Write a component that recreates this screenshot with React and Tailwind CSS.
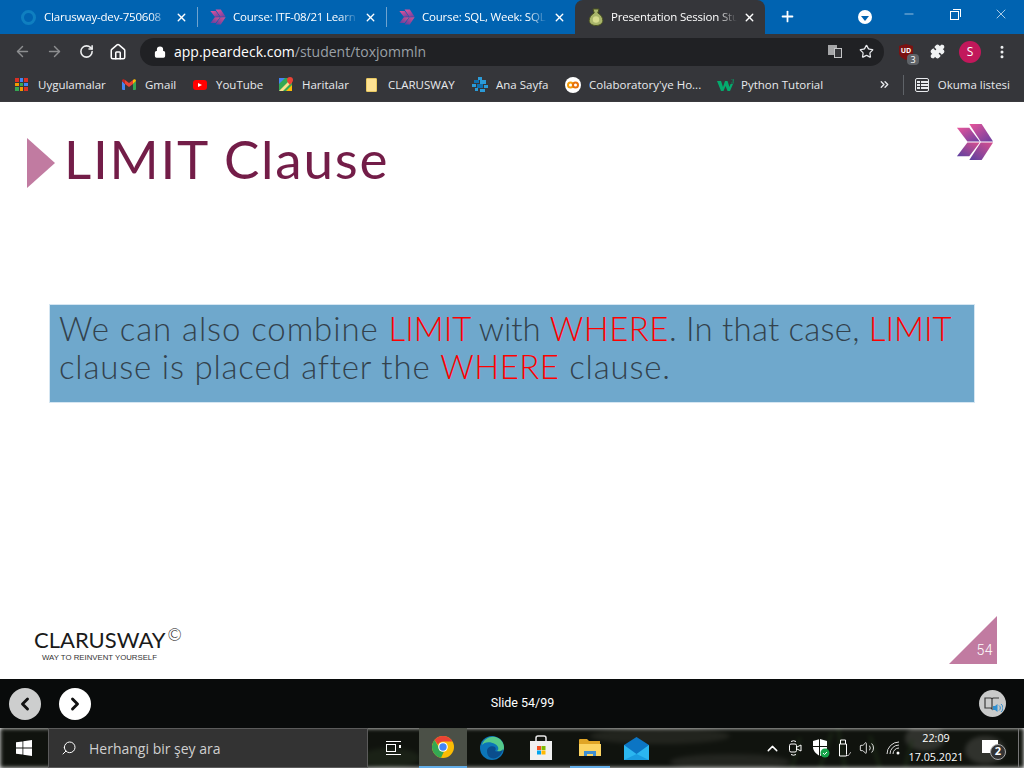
import { ArrowLeft, ArrowRight, RotateCw, Home, Lock, Star, Puzzle, Plus, X, Minus, ChevronLeft, ChevronRight, ChevronUp, ChevronsRight, Search, MoreVertical, Volume2 } from "lucide-react";

function Chevrons({ size = 16 }) {
  return (
    <svg width={size} height={size} viewBox="0 0 40 40" className="shrink-0">
      <defs>
        <linearGradient id="chevTop" x1="0" y1="0" x2="1" y2="1">
          <stop offset="0" stopColor="#e8559a" />
          <stop offset="1" stopColor="#6b3fa0" />
        </linearGradient>
        <linearGradient id="chevBottom" x1="0" y1="1" x2="1" y2="0">
          <stop offset="0" stopColor="#5b3fa0" />
          <stop offset="1" stopColor="#d9508f" />
        </linearGradient>
      </defs>
      <path d="M1 5h13l11 14.500H12z" fill="url(#chevTop)" />
      <path d="M12 20.500h13L14 35H1z" fill="url(#chevBottom)" />
      <path d="M14 1h13l12 18.500H26z" fill="url(#chevTop)" />
      <path d="M26 20.500h13L27 39H14z" fill="url(#chevBottom)" />
    </svg>
  );
}

function PearIcon() {
  return (
    <svg width="16" height="18" viewBox="0 0 16 18" className="shrink-0">
      <path d="M5 1h6L9.800 5c3 1.500 5 4.500 5 7.500 0 3-3 5-6.800 5s-6.800-2-6.800-5C1.200 9.500 3.200 6.500 6.200 5z" fill="#a9b56b" stroke="#4b5320" strokeWidth="1" />
      <circle cx="8" cy="11.500" r="3.200" fill="#d6dc8e" />
    </svg>
  );
}

function Tab({ icon, title, active }) {
  return (
    <div className={active ? "flex items-center h-[34px] w-[190px] rounded-t-lg bg-[#35363a] pl-[13px] pr-[9px]" : "flex items-center h-[34px] w-[188px] pl-[12px] pr-[9px]"}>
      {icon}
      <span className="ml-[7px] mb-[1px] flex-1 overflow-hidden whitespace-nowrap text-[11.500px] tracking-[-0.2px] text-white mask-r-from-85%">{title}</span>
      <X size={13} strokeWidth={2.500} className="ml-[6px] shrink-0 text-white" />
    </div>
  );
}

function Bookmark({ icon, label, className }) {
  return (
    <div className={"flex items-center whitespace-nowrap text-[11.500px] text-[#e8eaed] " + className}>
      {icon}
      <span>{label}</span>
    </div>
  );
}

function AppsIcon() {
  const colors = ["#d93025", "#4285f4", "#d93025", "#f29900", "#34a853", "#4285f4", "#34a853", "#f29900", "#d93025"];
  return (
    <div className="grid grid-cols-3 gap-[1px] w-[13px] h-[13px]">
      {colors.map((c, i) => (
        <div key={i} style={{ background: c }} />
      ))}
    </div>
  );
}

function GmailIcon() {
  return (
    <svg width="14" height="11" viewBox="0 0 14 11">
      <path d="M0 2v8a1 1 0 0 0 1 1h2V5z" fill="#4285f4" />
      <path d="M14 2v8a1 1 0 0 1-1 1h-2V5z" fill="#34a853" />
      <path d="M3 5V1L7 4l4-3v4L7 8z" fill="#ea4335" />
      <path d="M0 2c0-2 2-2.500 3-1v4z" fill="#c5221f" />
      <path d="M14 2c0-2-2-2.500-3-1v4z" fill="#fbbc04" />
    </svg>
  );
}

function MapsIcon() {
  return (
    <svg width="15" height="15" viewBox="0 0 15 15">
      <rect x="0" y="1" width="13" height="13" fill="#34a853" />
      <path d="M0 14 13 1v4L4 14z" fill="#fbe08a" />
      <path d="M7 14 13 8v6z" fill="#fbbc04" />
      <path d="M0 1h6L0 7z" fill="#4285f4" />
      <path d="M11 0a3 3 0 0 1 3 3c0 2-3 5-3 5S8 5 8 3a3 3 0 0 1 3-3z" fill="#ea4335" />
    </svg>
  );
}

function AnaIcon() {
  return (
    <svg width="16" height="15" viewBox="0 0 16 15" fill="#2b9bd8">
      <rect x="6" y="0" width="4" height="3" />
      <rect x="2" y="3" width="5" height="3" fill="#0d6fb0" />
      <rect x="8" y="3" width="6" height="4" />
      <rect x="0" y="7" width="4" height="3" />
      <rect x="5" y="7" width="6" height="4" fill="#0d6fb0" />
      <rect x="12" y="8" width="4" height="3" />
      <rect x="3" y="11" width="3" height="3" />
      <rect x="8" y="12" width="5" height="3" />
    </svg>
  );
}

function WinLogo() {
  return (
    <svg width="16" height="16" viewBox="0 0 16 16" fill="#fff">
      <path d="M0 2.300 6.500 1.400V7.600H0zM7.300 1.300 16 0V7.600H7.300zM0 8.400H6.500V14.600L0 13.700zM7.300 8.400H16V16L7.300 14.700z" />
    </svg>
  );
}

function Wallpaper() {
  return (
    <svg className="absolute inset-0 blur-[2px]" width="1024" height="40" viewBox="0 0 1024 40">
      <rect width="1024" height="40" fill="#10130e" />
      <ellipse cx="150" cy="8" rx="90" ry="10" fill="#171c13" />
      <ellipse cx="390" cy="30" rx="30" ry="10" fill="#1a2116" />
      <ellipse cx="660" cy="8" rx="70" ry="8" fill="#22241e" />
      <ellipse cx="730" cy="34" rx="60" ry="8" fill="#232520" />
      <ellipse cx="925" cy="10" rx="20" ry="13" fill="#30322d" />
      <ellipse cx="985" cy="22" rx="20" ry="14" fill="#30322d" />
      <path d="M820 40 832 4M845 40 838 0M880 40 870 8M905 40 912 12M792 40 800 10" stroke="#1f3019" strokeWidth="2" />
    </svg>
  );
}

export default function App() {
  return (
    <div className="flex flex-col w-[1024px] h-[768px] overflow-hidden bg-white font-['Open_Sans',sans-serif]">
      {/* tabs */}
      <div className="flex items-start h-[34px] shrink-0 bg-[#0063b1] pl-[9px]">
        <Tab title="Clarusway-dev-750608" icon={<div className="w-[15px] h-[15px] mr-[1px] shrink-0 rounded-full border-[3px] border-[#0f7fc0] bg-[#0063b1]" />} />
        <div className="w-px h-[20px] mt-[7px] bg-[#6fa3cf]" />
        <Tab title="Course: ITF-08/21 Learn" icon={<Chevrons />} />
        <div className="w-px h-[20px] mt-[7px] bg-[#6fa3cf]" />
        <Tab title="Course: SQL, Week: SQL" icon={<Chevrons />} />
        <Tab active title="Presentation Session Stu" icon={<PearIcon />} />
        <Plus size={17} strokeWidth={2.500} className="ml-[14px] mt-[8px] text-white" />
        <div className="ml-[62px] mt-[10px] flex items-center justify-center w-[14px] h-[14px] rounded-full bg-white">
          <div className="w-0 h-0 mt-[2px] border-x-[4px] border-t-[5px] border-x-transparent border-t-[#0063b1]" />
        </div>
        <Minus size={14} strokeWidth={1} className="ml-[30px] mt-[7px] text-white" />
        <div className="relative ml-[34px] mt-[11px] w-[9px] h-[9px] border border-white">
          <div className="absolute -top-[3px] -right-[3px] w-[8px] h-[8px] border-t border-r border-white" />
        </div>
        <X size={16} strokeWidth={1} className="ml-[34px] mt-[6px] text-white" />
      </div>

      {/* toolbar */}
      <div className="flex items-center h-[35px] shrink-0 bg-[#35363a] pl-[14px] pr-[8px]">
        <ArrowLeft size={17} className="text-[#8d8e90]" />
        <ArrowRight size={17} className="ml-[15px] text-[#8d8e90]" />
        <RotateCw size={15} strokeWidth={2.500} className="ml-[16px] text-[#eeeff0]" />
        <Home size={18} strokeWidth={2} className="ml-[15px] text-white" />
        <div className="flex items-center ml-[13px] w-[744px] h-[28px] rounded-full bg-[#202124] pl-[14px] pr-[10px]">
          <Lock size={12} strokeWidth={2.500} className="text-white" fill="white" />
          <span className="ml-[8px] text-[14px] text-white">app.peardeck.com<span className="text-[#9aa0a6]">/student/toxjommln</span></span>
          <div className="relative ml-auto w-[14px] h-[13px]">
            <div className="absolute left-0 top-0 w-[9px] h-[10px] bg-[#a5a6a8]" />
            <div className="absolute right-0 bottom-0 w-[8px] h-[10px] border border-[#c4c5c7] bg-[#35363a]" />
          </div>
          <Star size={15} className="ml-[17px] text-[#e8eaed]" />
        </div>
        <div className="relative ml-[15px] w-[14px] h-[16px]">
          <svg width="14" height="16" viewBox="0 0 14 16" className="absolute inset-0">
            <path d="M7 0l7 2v7c0 3-3 5-7 7-4-2-7-4-7-7V2z" fill="#7a1212" />
          </svg>
          <span className="absolute inset-0 text-[7px] font-bold leading-[14px] text-center text-white">UD</span>
          <div className="absolute -right-[6px] top-[10px] w-[12px] h-[11px] rounded-sm bg-[#5f6368] text-[9px] text-center leading-[11px] text-white">3</div>
        </div>
        <Puzzle size={15} className="ml-[17px] text-[#f1f3f4]" fill="#f1f3f4" />
        <div className="flex items-center justify-center ml-[14px] w-[22px] h-[22px] rounded-full bg-[#c2185b] text-[12px] text-white">S</div>
        <MoreVertical size={16} strokeWidth={2.500} className="ml-[13px] text-[#f1f3f4]" />
      </div>

      {/* bookmarks */}
      <div className="flex items-center h-[33px] shrink-0 border-b border-[#3a3b3e] bg-[#35363a] pl-[15px] pr-[14px] pb-[1px]">
        <Bookmark icon={<AppsIcon />} label="Uygulamalar" className="w-[107px] gap-[10px]" />
        <Bookmark icon={<GmailIcon />} label="Gmail" className="w-[71px] gap-[9px]" />
        <Bookmark icon={<div className="flex items-center justify-center w-[14px] h-[10px] rounded-[3px] bg-[#ff0000]"><div className="w-0 h-0 border-y-[2.500px] border-l-[4px] border-y-transparent border-l-white" /></div>} label="YouTube" className="w-[86px] gap-[9px]" />
        <Bookmark icon={<MapsIcon />} label="Haritalar" className="w-[87px] gap-[8px]" />
        <Bookmark icon={<div className="w-[11px] h-[14px] rounded-[1px] border border-[#e8c860] bg-[#fde293]" />} label="CLARUSWAY" className="w-[106px] gap-[11px]" />
        <Bookmark icon={<AnaIcon />} label="Ana Sayfa" className="w-[93px] gap-[8px]" />
        <Bookmark
          icon={
            <svg width="16" height="16" viewBox="0 0 16 16">
              <circle cx="8" cy="8" r="8" fill="#fff" />
              <circle cx="5.500" cy="8" r="2.500" fill="none" stroke="#f59e0b" strokeWidth="2" />
              <circle cx="10.500" cy="8" r="2.500" fill="none" stroke="#e8710a" strokeWidth="2" />
            </svg>
          }
          label="Colaboratory'ye Ho..."
          className="w-[152px] gap-[8px]"
        />
        <Bookmark
          icon={
            <svg width="17" height="12" viewBox="0 0 17 12">
              <path d="M0 2h4l2 6 2-6h2.500l2 6 1-3h2.500l-3 7h-2.500L8.500 7l-2 5H4z" fill="#04aa6d" />
              <path d="M14 0h3v1l-1.500 1H17v2h-3" fill="none" stroke="#04aa6d" strokeWidth=".6" />
            </svg>
          }
          label="Python Tutorial"
          className="gap-[7px]"
        />
        <ChevronsRight size={13} strokeWidth={2.500} className="ml-auto mr-[2px] text-[#e8eaed]" />
        <div className="w-px h-[20px] ml-[10px] bg-[#5f6368]" />
        <Bookmark
          icon={
            <div className="grid grid-cols-[3px_7px] gap-[1px] content-center w-[14px] h-[14px] rounded-[2px] border border-[#e8eaed] pl-[1px]">
              <div className="h-[2px] bg-[#e8eaed]" /><div className="h-[2px] bg-[#e8eaed]" />
              <div className="h-[2px] bg-[#e8eaed]" /><div className="h-[2px] bg-[#e8eaed]" />
              <div className="h-[2px] bg-[#e8eaed]" /><div className="h-[2px] bg-[#e8eaed]" />
            </div>
          }
          label="Okuma listesi"
          className="ml-[11px] gap-[9px]"
        />
      </div>

      {/* slide */}
      <div className="flex flex-col flex-1 bg-white">
        <div className="flex items-start h-[202px] shrink-0 pl-[27px] pr-[30px] pt-[36px]">
          <div className="w-0 h-0 border-y-[25px] border-l-[28px] border-y-transparent border-l-[#c17ba1]" />
          <h1 className="ml-[9px] text-[53px] leading-[50px] -mt-[4px] text-[#731d48] font-['Lato',sans-serif] tracking-[1.750px]">LIMIT Clause</h1>
          <div className="ml-auto -mt-[15px]">
            <Chevrons size={38} />
          </div>
        </div>
        <div className="mx-[49px] h-[99px] shrink-0 border border-[#d5e6f2] bg-[#6fa8cc] pl-[9px] pt-[4px] font-['Lato',sans-serif] font-light text-[33px] leading-[38px] text-[#33424d]">
          <span className="tracking-[0.9px]">We can also combine </span>
          <span className="text-[#ff0000]">LIMIT</span> with <span className="tracking-[0.5px] text-[#ff0000]">WHERE</span>
          <span className="tracking-[0.2px]">. In that case, </span>
          <span className="text-[#ff0000]">LIMIT</span>
          <br />
          <span className="tracking-[0.8px]">clause is placed after the </span>
          <span className="tracking-[0.5px] text-[#ff0000]">WHERE</span>
          <span className="tracking-[0.8px]"> clause.</span>
        </div>
        <div className="flex items-end justify-between mt-auto pl-[34px] pr-[27px] pb-[15px]">
          <div className="pb-[1px]">
            <div className="flex items-start font-['Lato',sans-serif] text-[#1a1a1a]">
              <span className="text-[22px] leading-[24px]">CLARUSWAY</span>
              <span className="ml-[2px] text-[17px] leading-[17px] -mt-[2px] font-light">©</span>
            </div>
            <div className="ml-[8px] text-[7.800px] leading-[11px] font-['Liberation_Sans',sans-serif] text-[#333]">WAY TO REINVENT YOURSELF</div>
          </div>
          <div className="flex items-end justify-end w-[48px] h-[48px] bg-[#c17ba1] [clip-path:polygon(100%_0,100%_100%,0_100%)] pr-[4px] pb-[4px] text-[14px] leading-[20px] tracking-[0.5px] font-light text-white font-['Roboto',sans-serif]">54</div>
        </div>
      </div>

      {/* slide nav */}
      <div className="flex items-center h-[49px] shrink-0 bg-[#090b0b] pl-[9px] pr-[18px]">
        <div className="flex items-center justify-center w-[32px] h-[32px] rounded-full bg-[#cdcece]">
          <ChevronLeft size={20} strokeWidth={3.500} className="text-[#111]" />
        </div>
        <div className="flex items-center justify-center ml-[18px] w-[32px] h-[32px] rounded-full bg-white">
          <ChevronRight size={20} strokeWidth={3.500} className="text-[#111]" />
        </div>
        <div className="flex-1 pr-[25px] text-center text-[12.500px] font-['Roboto',sans-serif] text-white">Slide 54/99</div>
        <div className="flex items-center justify-center w-[27px] h-[27px] rounded-full bg-[#c9caca]">
          <svg width="20" height="18" viewBox="0 0 20 18" fill="none">
            <path d="M2 3h6l1 1v10l-1-1H2zM16 3h-6L9 4v10" stroke="#3a3a3a" strokeWidth="1.200" />
            <path d="M10 11h2l2.500-2v8L12 15h-2z" fill="#2f8fd0" />
            <path d="M16 10.500a3 3 0 0 1 0 5M18 9a5 5 0 0 1 0 8" stroke="#2f8fd0" strokeWidth="1" />
          </svg>
        </div>
      </div>

      {/* taskbar */}
      <div className="relative flex items-center h-[40px] shrink-0 overflow-hidden">
        <Wallpaper />
        <div className="relative flex items-center w-full h-full">
          <div className="flex justify-center w-[48px]"><WinLogo /></div>
          <div className="flex items-center w-[320px] h-[40px] border border-[#5b5b5b] bg-[#333333] pl-[12px]">
            <Search size={16} strokeWidth={1.500} className="-scale-x-100 text-white" />
            <span className="ml-[12px] text-[14px] text-[#d0d0d0]">Herhangi bir şey ara</span>
          </div>
          <div className="flex justify-center w-[51px]">
            <div className="relative w-[15px] h-[14px] border-y border-white">
              <div className="absolute left-[0px] top-[2px] w-[10px] h-[8px] border border-white" />
              <div className="absolute right-0 top-[3px] w-[2px] h-[3px] bg-white" />
            </div>
          </div>
          <div className="flex items-center justify-center w-[48px] h-full border-b-2 border-[#63aee8] bg-[#4b5047]">
            <svg width="22" height="22" viewBox="0 0 22 22">
              <circle cx="11" cy="11" r="11" fill="#fbbc04" />
              <path d="M11 0a11 11 0 0 1 9.500 5.500H11a5.500 5.500 0 0 0-5 3.200L2.500 4A11 11 0 0 1 11 0z" fill="#ea4335" />
              <path d="M2.500 4 7 11.500a5 5 0 0 0 5 4l-3 6.300A11 11 0 0 1 2.500 4z" fill="#34a853" />
              <circle cx="11" cy="11" r="4.800" fill="#fff" />
              <circle cx="11" cy="11" r="3.700" fill="#4285f4" />
            </svg>
          </div>
          <div className="flex justify-center w-[50px]">
            <svg width="24" height="24" viewBox="0 0 24 24">
              <circle cx="12" cy="12" r="12" fill="#0c75b8" />
              <path d="M2 9C4 2 12-1 18 2c4 2 6 6 6 10 0 3-4 4-7 3 2-1 2-5-2-7C10 5 4 6 2 9z" fill="#55c98a" />
              <path d="M7 15c0-4 5-6 8-4 1 1 1 3 0 4 2 1 6 1 8-2-1 6-7 11-12 9-3-1-4-4-4-7z" fill="#0a4d8c" />
            </svg>
          </div>
          <div className="flex justify-center w-[48px]">
            <svg width="24" height="26" viewBox="0 0 24 26">
              <path d="M7 7V3a2 2 0 0 1 2-2h6a2 2 0 0 1 2 2v4" fill="none" stroke="#e8e8e8" strokeWidth="1.500" />
              <rect x="1" y="6" width="22" height="19" fill="#f0f0f0" />
              <rect x="8" y="11" width="4" height="4" fill="#f25022" />
              <rect x="12.500" y="11" width="4" height="4" fill="#7fba00" />
              <rect x="8" y="15.500" width="4" height="4" fill="#00a4ef" />
              <rect x="12.500" y="15.500" width="4" height="4" fill="#ffb900" />
            </svg>
          </div>
          <div className="flex items-center justify-center ml-[5px] w-[40px] h-full border-b-2 border-[#63aee8]">
            <svg width="22" height="19" viewBox="0 0 22 19">
              <path d="M0 2a1 1 0 0 1 1-1h7l2 2h11v15H0z" fill="#e0a526" />
              <rect x="0" y="6" width="22" height="12" fill="#fcd462" />
              <path d="M5 18v-5h12v5h-3v-2H8v2z" fill="#3f8fd2" />
            </svg>
          </div>
          <div className="flex justify-center w-[52px]">
            <svg width="25" height="23" viewBox="0 0 25 23">
              <path d="M12.500 0 25 8v15H0V8z" fill="#0c75c4" />
              <path d="M0 8 12.500 17 25 8v15H0z" fill="#2bb6f0" />
              <path d="M12.500 17 0 23h25z" fill="#1a9ce0" />
            </svg>
          </div>
          {/* tray */}
          <ChevronUp size={17} className="ml-[102px] text-white" />
          <svg width="13" height="18" viewBox="0 0 13 18" fill="none" stroke="#fff" className="ml-[8px]">
            <rect x=".500" y="5" width="7" height="8" rx="1.500" />
            <path d="M8 8l4-2v6l-4-2" />
            <path d="M2 2.500a5 5 0 0 1 5 0M2 15.500a5 5 0 0 0 5 0" />
          </svg>
          <svg width="17" height="19" viewBox="0 0 17 19" className="ml-[11px]">
            <path d="M7 0l7 2v6c0 4-3 7-7 9-4-2-7-5-7-9V2z" fill="#fff" />
            <path d="M6.500 0v17M0 7.500h14" stroke="#10130e" strokeWidth="1" />
            <circle cx="12" cy="14" r="4.500" fill="#16a34a" />
            <path d="M10 14l1.500 1.500 2.500-2.500" fill="none" stroke="#fff" strokeWidth="1" />
          </svg>
          <svg width="14" height="18" viewBox="0 0 14 18" fill="none" stroke="#fff" className="ml-[7px]">
            <path d="M2.500 5h7v12h-7zM3.500 5V1h5v4" />
            <path d="M9 15l2 2 3-4" stroke="#aaa" />
          </svg>
          <Volume2 size={16} strokeWidth={1.300} className="ml-[8px] text-white" />
          <svg width="14" height="14" viewBox="0 0 14 14" fill="none" stroke="#ddd" strokeWidth="1" className="ml-[11px]">
            <path d="M1 13A12 12 0 0 1 13 1M4 13a9 9 0 0 1 9-9M7 13a6 6 0 0 1 6-6" />
            <circle cx="12" cy="12" r="1.500" fill="#fff" stroke="none" />
          </svg>
          <div className="ml-[8px] mb-[2px] w-[56px] text-center text-[10.800px] leading-[19px] text-white">
            <div>22:09</div>
            <div className="whitespace-nowrap">17.05.2021</div>
          </div>
          <div className="relative ml-[18px] w-[16px] h-[13px] mb-[4px] bg-white">
            <div className="absolute -right-[8px] top-[4px] flex items-center justify-center w-[16px] h-[16px] rounded-full border border-[#aaa] bg-[#333] text-[11px] font-bold text-white">2</div>
          </div>
          <div className="ml-[20px] w-px h-full bg-[#777]" />
        </div>
      </div>
    </div>
  );
}
